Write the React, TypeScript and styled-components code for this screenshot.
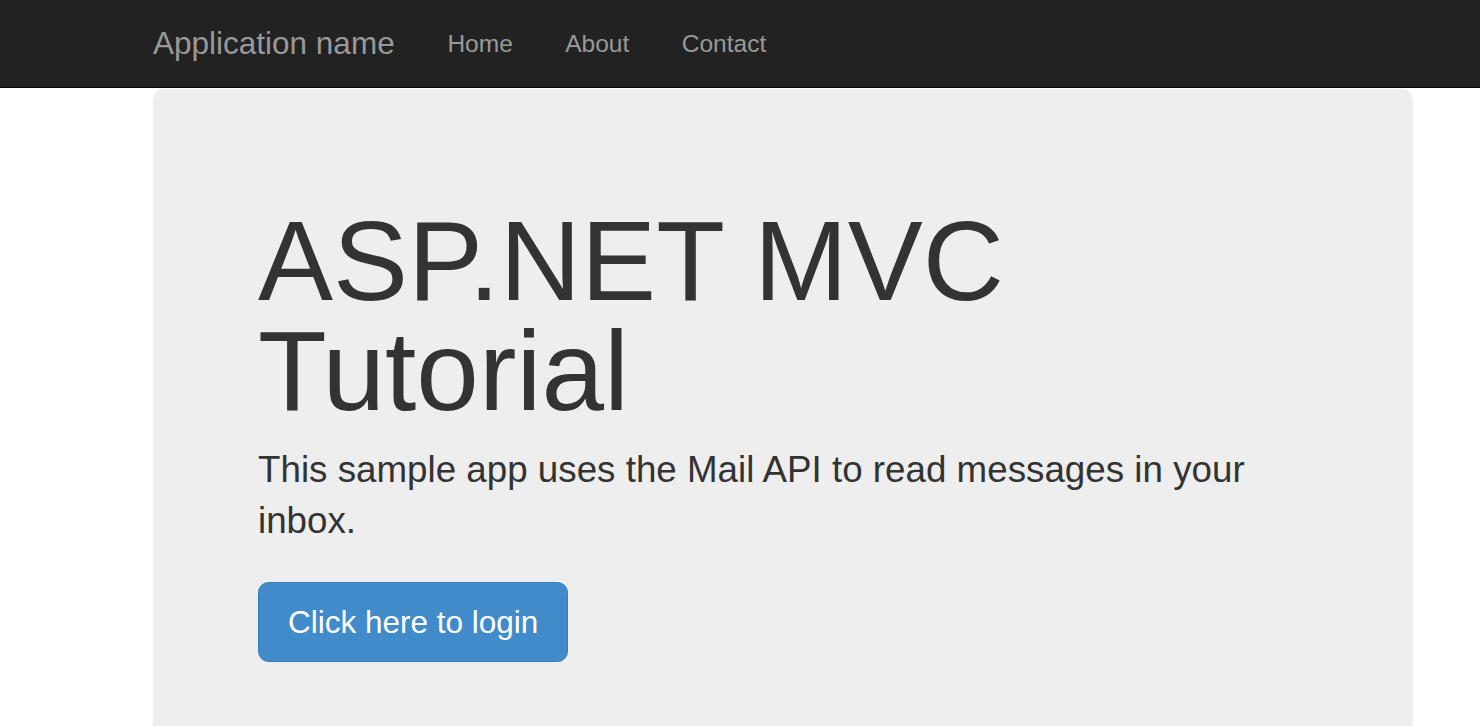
import React from "react";
import styled, { createGlobalStyle } from "styled-components";

const GlobalStyle = createGlobalStyle`
  html, body {
    margin: 0;
    padding: 0;
    background: #ffffff;
  }
  body {
    font-family: "Liberation Sans", Arial, Helvetica, sans-serif;
    color: #333333;
    font-size: 24.5px;
    line-height: 1.428571429;
  }
  * { box-sizing: border-box; }
`;

const Page = styled.div`
  height: 100vh;
  overflow: hidden;
`;

const Navbar = styled.header`
  background: #222222;
  border-bottom: 1px solid #080808;
  height: 88px;
`;

const Container = styled.div`
  width: 1260px;
  margin-left: 153px;
`;

const NavInner = styled(Container)`
  display: flex;
  align-items: flex-start;
  height: 87px;
`;

const Brand = styled.a`
  display: block;
  color: #999999;
  font-size: 31.5px;
  line-height: 35px;
  padding: 25.5px 26.5px 26px 0;
  text-decoration: none;
`;

const NavList = styled.ul`
  display: flex;
  list-style: none;
  margin: 0;
  padding: 0;
`;

const NavLink = styled.a`
  display: block;
  color: #999999;
  font-size: 24.5px;
  line-height: 35px;
  padding: 25.5px 26.25px 26px;
  text-decoration: none;
`;

const Jumbotron = styled(Container)`
  margin-top: 1px;
  background: #eeeeee;
  border-radius: 10.5px;
  padding: 84px 105px 84px;
  min-height: 700px;
`;

const Heading = styled.h1`
  margin: 33px 0 17.5px;
  font-size: 112.5px;
  line-height: 110.25px;
  font-weight: 500;
  color: #333333;
`;

const Lead = styled.p`
  margin: 0 0 35.5px;
  font-size: 36.75px;
  line-height: 51.45px;
  font-weight: 200;
  color: #333333;
`;

const PrimaryButton = styled.a`
  display: inline-block;
  background: #428bca;
  border: 1px solid #357ebd;
  border-radius: 10.5px;
  color: #ffffff;
  font-size: 31.5px;
  line-height: 43px;
  padding: 17.5px 29px;
  text-decoration: none;
`;

export default function App() {
  return (
    <Page>
      <GlobalStyle />
      <Navbar>
        <NavInner>
          <Brand href="#">Application name</Brand>
          <NavList>
            <li><NavLink href="#">Home</NavLink></li>
            <li><NavLink href="#">About</NavLink></li>
            <li><NavLink href="#">Contact</NavLink></li>
          </NavList>
        </NavInner>
      </Navbar>
      <Jumbotron>
        <Heading>ASP.NET MVC Tutorial</Heading>
        <Lead>This sample app uses the Mail API to read messages in your inbox.</Lead>
        <PrimaryButton href="#">Click here to login</PrimaryButton>
      </Jumbotron>
    </Page>
  );
}
